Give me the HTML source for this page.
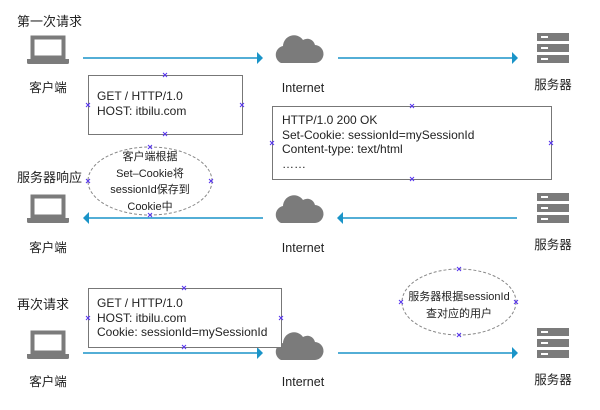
<!DOCTYPE html><html><head><meta charset="utf-8"><style>body{margin:0;background:#fff}svg{display:block}text{font-family:"Liberation Sans","Noto Sans CJK SC",sans-serif;fill:#222}</style></head><body>
<svg width="600" height="410" viewBox="0 0 600 410" xmlns="http://www.w3.org/2000/svg">
<defs>
<g id="lap"><rect x="-15.5" y="-18.5" width="31" height="20" fill="none" stroke="#7b7b7b" stroke-width="4"/><path d="M-21 3h42v3.5q0 1.5-1.5 1.5h-39q-1.5 0-1.5-1.5z" fill="#7b7b7b"/></g>
<g id="cld"><path d="M-22 12a9 9 0 0 1 2-17a11 11 0 0 1 20-6a8 8 0 0 1 12 5a9 9 0 0 1 -1 18z" fill="#7b7b7b"/></g>
<g id="srv" fill="#7b7b7b"><rect x="0" y="0" width="32" height="8"/><rect x="0" y="11" width="32" height="8"/><rect x="0" y="22" width="32" height="8"/><g fill="#fff"><rect x="4" y="3" width="7" height="2"/><rect x="4" y="14" width="7" height="2"/><rect x="4" y="25" width="7" height="2"/></g></g>
<g id="x"><path d="M-2-2l4 4M2-2l-4 4" stroke="#5533ee" stroke-width="1"/></g>
</defs>
<g font-size="13">
<text x="17" y="26">第一次请求</text>
<text x="17" y="182">服务器响应</text>
<text x="17" y="309">再次请求</text>
</g>
<g font-size="12.5" text-anchor="middle">
<text x="48" y="92">客户端</text><text x="303" y="92">Internet</text><text x="553" y="89">服务器</text>
<text x="48" y="252">客户端</text><text x="303" y="252">Internet</text><text x="553" y="249">服务器</text>
<text x="48" y="386">客户端</text><text x="303" y="386">Internet</text><text x="553" y="384">服务器</text>
</g>
<use href="#lap" x="48" y="56"/><use href="#lap" x="48" y="215"/><use href="#lap" x="48" y="351"/>
<use href="#cld" x="303" y="51"/><use href="#cld" x="303" y="211"/><use href="#cld" x="303" y="348"/>
<use href="#srv" x="537" y="33"/><use href="#srv" x="537" y="193"/><use href="#srv" x="537" y="328"/>
<g stroke="#1a94c8" stroke-width="1.5" fill="#1a94c8">
<line x1="83" y1="58" x2="258" y2="58"/><path d="M257 52l6 6-6 6z" stroke="none"/>
<line x1="338" y1="58" x2="513" y2="58"/><path d="M512 52l6 6-6 6z" stroke="none"/>
<line x1="87" y1="218" x2="263" y2="218"/><path d="M89 212l-6 6 6 6z" stroke="none"/>
<line x1="341" y1="218" x2="517" y2="218"/><path d="M343 212l-6 6 6 6z" stroke="none"/>
<line x1="83" y1="353" x2="258" y2="353"/><path d="M257 347l6 6-6 6z" stroke="none"/>
<line x1="338" y1="353" x2="513" y2="353"/><path d="M512 347l6 6-6 6z" stroke="none"/>
</g>
<g fill="#fff" stroke="#777" stroke-width="1">
<rect x="88.5" y="75.5" width="154" height="59"/>
<rect x="272.5" y="106.5" width="279" height="73"/>
<rect x="88.5" y="288.5" width="193" height="59"/>
</g>
<g fill="none" stroke="#888" stroke-dasharray="3,2">
<ellipse cx="150" cy="181" rx="62" ry="34"/>
<ellipse cx="459" cy="302" rx="57" ry="33"/>
</g>
<g font-size="12">
<text x="97" y="100">GET / HTTP/1.0</text><text x="97" y="115">HOST: itbilu.com</text>
<text x="282" y="124">HTTP/1.0 200 OK</text><text x="282" y="139">Set-Cookie: sessionId=mySessionId</text><text x="282" y="153">Content-type: text/html</text><text x="282" y="168">……</text>
<text x="97" y="307">GET / HTTP/1.0</text><text x="97" y="322">HOST: itbilu.com</text><text x="97" y="336">Cookie: sessionId=mySessionId</text>
</g>
<g font-size="11" text-anchor="middle">
<text x="150" y="160">客户端根据</text><text x="150" y="177">Set–Cookie将</text><text x="150" y="193">sessionId保存到</text><text x="150" y="210">Cookie中</text>
<text x="459" y="300">服务器根据sessionId</text><text x="459" y="317">查对应的用户</text>
</g>
<use href="#x" x="165" y="75"/><use href="#x" x="88" y="105"/><use href="#x" x="242" y="105"/><use href="#x" x="165" y="134"/>
<use href="#x" x="412" y="106"/><use href="#x" x="272" y="143"/><use href="#x" x="551" y="143"/><use href="#x" x="412" y="179"/>
<use href="#x" x="184" y="288"/><use href="#x" x="88" y="318"/><use href="#x" x="281" y="318"/><use href="#x" x="184" y="347"/>
<use href="#x" x="150" y="147"/><use href="#x" x="88" y="181"/><use href="#x" x="211" y="181"/><use href="#x" x="150" y="215"/>
<use href="#x" x="459" y="269"/><use href="#x" x="401" y="302"/><use href="#x" x="516" y="302"/><use href="#x" x="459" y="335"/>
</svg></body></html>
